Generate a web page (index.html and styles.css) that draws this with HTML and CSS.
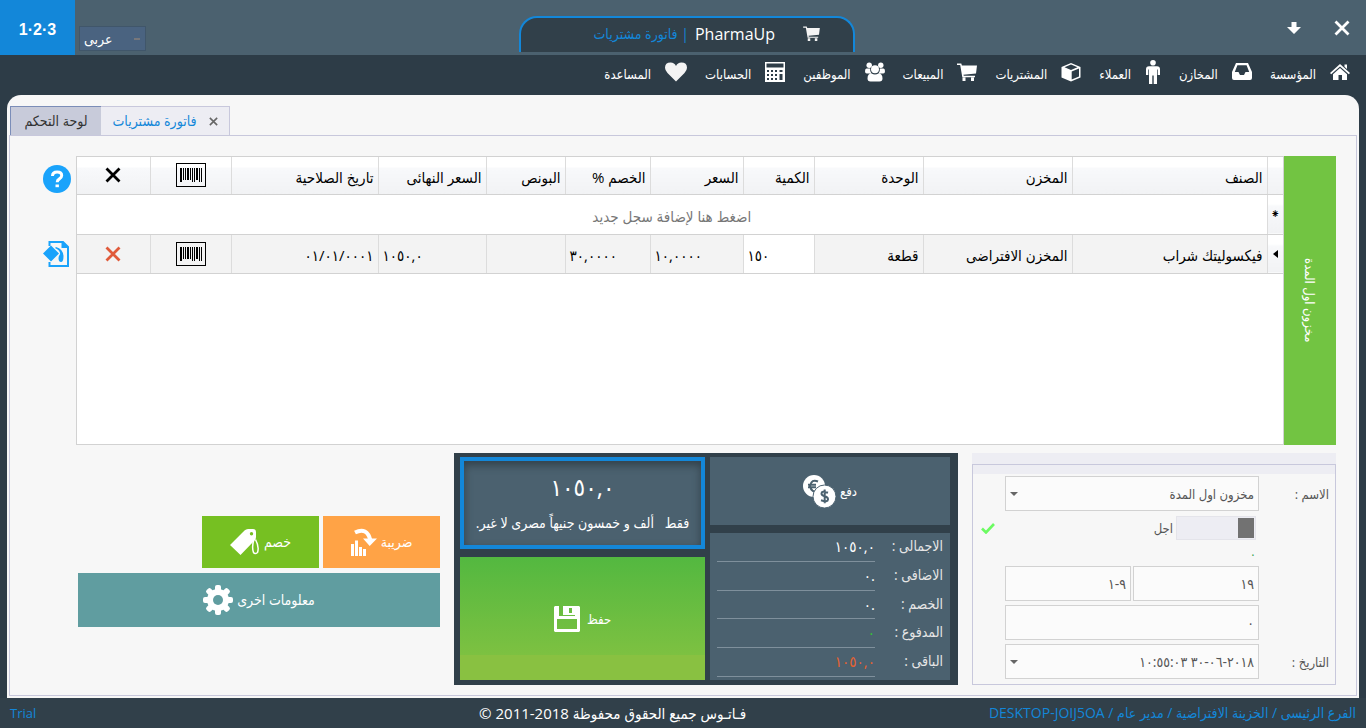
FILE: index.html
```html
<!DOCTYPE html>
<html lang="ar" dir="rtl">
<head>
<meta charset="utf-8">
<title>PharmaUp</title>
<link rel="stylesheet" href="styles.css">
</head>
<body>
<svg class="sprite" aria-hidden="true">
  <symbol id="i-barcode" viewBox="0 0 30 24">
    <rect x="0.5" y="0.5" width="29" height="23" fill="none" stroke="#000"/>
    <path fill="#000" d="M4 5h2v14H4zM7 5h1v12H7zM9 5h1v12H9zM11 5h2v12h-2zM14 5h1v12h-1zM16 5h1v14h-1zM18 5h1v14h-1zM20 5h2v12h-2zM23 5h1v14h-1zM25 5h1v14h-1z"/>
  </symbol>
  <symbol id="i-x" viewBox="0 0 16 16">
    <path d="M1.500 1.500l13 13M14.500 1.500l-13 13" fill="none" stroke="currentColor" stroke-width="2.800"/>
  </symbol>
  <symbol id="i-cart" viewBox="0 0 20 18">
    <path fill="currentColor" d="M0 .5h4.300l.6 2H20l-1 8-12.600 1.300.4 1H18v1.400H5.300L3.200 2H0zM5.500 14.600h3V18h-3zM14 14.600h3V18h-3z"/>
  </symbol>
</svg>

<header class="topbar">
  <div class="window-buttons">
    <button class="icon-btn" type="button" aria-label="إغلاق"><svg width="16" height="16"><use href="#i-x"/></svg></button>
    <button class="icon-btn" type="button" aria-label="تصغير"><svg width="14" height="12" viewBox="0 0 14 12"><path fill="#fff" d="M4.500 0h5v5H14l-7 7-7-7h4.500z"/></svg></button>
  </div>
  <div class="window-title">
    <svg class="title-cart" width="17" height="15"><use href="#i-cart"/></svg>
    <h1 class="app-name">PharmaUp</h1>
    <span class="app-page">| فاتورة مشتريات</span>
  </div>
  <div class="topbar-start">
    <select class="lang" aria-label="اللغة"><option>عربى</option></select>
    <button class="numbers" type="button" dir="ltr">1·2·3</button>
  </div>
</header>

<nav class="menu">
  <a href="#"><svg width="20" height="20" viewBox="0 0 20 20"><path fill="#fff" d="M10 2l10 9-1.200 1.300L10 4.500l-8.800 7.800L0 11zM14.500 2.500H17V7l-2.500-2.200zM10 6l7 6.200V18h-5v-5H8.500v5H3v-5.800z"/></svg><span>المؤسسة</span></a>
  <a href="#"><svg width="20" height="20" viewBox="0 0 20 20"><path fill="#fff" fill-rule="evenodd" d="M4 1h12l4 9v6q0 2-2 2H2q-2 0-2-2v-6zM5.400 3.200L2.800 10h3.700l1.500 3h4l1.500-3h3.700l-2.600-6.800z"/></svg><span>المخازن</span></a>
  <a href="#"><svg width="16" height="24" viewBox="0 0 16 24"><circle cx="8" cy="2.800" r="2.800" fill="#fff"/><path fill="#fff" d="M4 6.300h8q3 0 3 3V15h-2.300V9.500H12V24H8.700v-8.500H7.300V24H4V9.500h-.7V15H1V9.300q0-3 3-3z"/></svg><span>العملاء</span></a>
  <a href="#"><svg width="20" height="20" viewBox="0 0 20 20"><path fill="#fff" fill-rule="evenodd" d="M10 1l9.500 4v10.500L10 19.500.5 15.500V5zM10 2.500L3.500 5.200 10 8l6.500-2.800zM10.700 9.500v8l7.300-3v-8z"/></svg><span>المشتريات</span></a>
  <a href="#"><svg width="20" height="18"><use href="#i-cart"/></svg><span>المبيعات</span></a>
  <a href="#"><svg width="20" height="20" viewBox="0 0 20 20"><g fill="#fff"><circle cx="4.200" cy="3.200" r="2.700"/><circle cx="15.800" cy="3.200" r="2.700"/><circle cx="10" cy="7.300" r="4"/><path d="M1.500 6.500h3.700q-.5 3 1.300 5H1.800Q0 11.500 0 9.300q0-2.800 1.500-2.800zM18.500 6.500h-3.700q.5 3-1.300 5h4.700q1.800 0 1.800-2.200 0-2.800-1.500-2.800zM6.500 11.500q3.500 2 7 0 4 0 4 5 0 3-3 3h-9q-3 0-3-3 0-5 4-5z"/></g></svg><span>الموظفين</span></a>
  <a href="#"><svg width="20" height="22" viewBox="0 0 20 22"><path fill="#fff" fill-rule="evenodd" d="M0 1h20v20H0zM1.500 2.500v4h17v-4zM2 9v2h2V9zM6 9v2h2V9zM10 9v2h2V9zM14.500 9v2h3V9zM2 13v2h2v-2zM6 13v2h2v-2zM10 13v2h2v-2zM14.500 13v6h3v-6zM2 17v2h2v-2zM6 17v2h2v-2zM10 17v2h2v-2z"/></svg><span>الحسابات</span></a>
  <a href="#"><svg width="22" height="20" viewBox="0 0 22 20"><path fill="#f4f4f4" d="M11 19.500L2.500 11Q0 8.500 0 5.800 0 .5 5.600.5 9.500.5 11 4 12.500.5 16.400.5 22 .5 22 5.800q0 2.700-2.500 5.200z"/></svg><span>المساعدة</span></a>
</nav>

<main class="workspace">
  <div class="tabs" role="tablist">
    <div class="tab active" role="tab" aria-selected="true">
      <button class="tab-close" type="button" aria-label="إغلاق التبويب"><svg width="9" height="9"><use href="#i-x"/></svg></button>
      <span>فاتورة مشتريات</span>
    </div>
    <div class="tab" role="tab">لوحة التحكم</div>
  </div>

  <div class="frame">
    <section class="items">
      <div class="side-label"><span>مخزون اول المدة</span></div>
      <div class="grid-box">
        <table class="grid">
          <colgroup>
            <col class="c-mark"><col><col class="c-store"><col class="c-unit"><col class="c-qty"><col class="c-price"><col class="c-disc"><col class="c-bonus"><col class="c-final"><col class="c-date"><col class="c-code"><col class="c-del">
          </colgroup>
          <thead>
            <tr>
              <th></th><th>الصنف</th><th>المخزن</th><th>الوحدة</th><th>الكمية</th><th>السعر</th><th>الخصم %</th><th>البونص</th><th>السعر النهائى</th><th>تاريخ الصلاحية</th>
              <th class="mid"><svg width="30" height="24"><use href="#i-barcode"/></svg></th>
              <th class="mid"><svg width="16" height="16"><use href="#i-x"/></svg></th>
            </tr>
          </thead>
          <tbody>
            <tr class="new-row"><td class="mark">⁕</td><td colspan="11">اضغط هنا لإضافة سجل جديد</td></tr>
            <tr class="row">
              <td class="mark"><svg width="5" height="8" viewBox="0 0 5 8"><path d="M5 0v8L0 4z"/></svg></td>
              <td>فيكسوليتك شراب</td><td>المخزن الافتراضى</td><td>قطعة</td>
              <td class="num editing">١٥٠</td><td class="num">١٠,٠٠٠٠</td><td class="num">٣٠,٠٠٠٠</td><td></td><td class="num">١٠٥٠,٠</td><td>٠١/٠١/٠٠٠١</td>
              <td class="mid"><svg width="30" height="24"><use href="#i-barcode"/></svg></td>
              <td class="mid"><button class="icon-btn delete" type="button" aria-label="حذف"><svg width="16" height="16"><use href="#i-x"/></svg></button></td>
            </tr>
          </tbody>
        </table>
      </div>
      <div class="tools">
        <button class="icon-btn" type="button" aria-label="مساعدة"><svg width="28" height="28" viewBox="0 0 28 28"><circle cx="14" cy="14" r="14" fill="#1aa3fb"/><path d="M9.500 11q0-4 4.600-4t4.600 3.600q0 2-2.300 3.300-2.200 1.200-2.200 3.400" fill="none" stroke="#fff" stroke-width="3"/><path fill="#fff" d="M12.500 19.500h3.400v2.700h-3.400z"/></svg></button>
        <button class="icon-btn" type="button" aria-label="تنسيق"><svg width="26" height="26" viewBox="0 0 26 26"><path d="M6.500 5V1H20l5 5v19H6.500v-4" fill="none" stroke="#1aa3fb" stroke-width="2"/><path fill="#1aa3fb" d="M18.500 0L26 7h-7.500zM0 12.500L8 4.500l8 8-8 8zM13 6q7 2 7.500 9 0 6-2.500 6t-2.500-4q0-2 1.700-4Q17 9 12 7z"/></svg></button>
      </div>
    </section>

    <section class="bottom">
      <form class="details">
        <div class="fields">
          <label for="name">الاسم :</label>
          <span class="pick"><select id="name"><option>مخزون اول المدة</option></select></span>
          <i></i>

          <i></i>
          <span class="switch"><input type="checkbox" id="credit"><label for="credit">اجل</label></span>
          <svg class="tick" width="14" height="11" viewBox="0 0 14 11"><path d="M1 5.500l4 4L13 1" fill="none" stroke="#6cfb62" stroke-width="2.600"/></svg>

          <i></i><output class="balance">٠</output><i></i>

          <i></i>
          <span class="pair"><input type="text" value="١٩" aria-label="الرقم"><input type="text" value="٩-١" aria-label="المرجع"></span>
          <i></i>

          <i></i><input type="text" value="٠" aria-label="القيمة"><i></i>

          <label for="date">التاريخ :</label>
          <span class="pick"><select id="date" class="date"><option>٢٠١٨-٠٦-٣٠ ١٠:٥٥:٠٣</option></select></span>
          <i></i>
        </div>
      </form>

      <div class="summary">
        <div class="summary-col">
          <button class="tile pay" type="button"><span>دفع</span>
            <svg width="33" height="33" viewBox="0 0 33 33"><circle cx="11" cy="11" r="11" fill="#fff"/><path d="M15 6.500q-6.500-3-8 4.500 1.500 7.500 8 4.500M5 9.700h8M5 12.300h8" fill="none" stroke="#4b616f" stroke-width="2"/><circle cx="21.500" cy="21.500" r="11.500" fill="#fff" stroke="#4b616f"/><path d="M25 17.800q-6.500-2.500-6.500.8 0 2 3 2.700 3.500.8 3.500 3-.3 3.200-7 1M21.700 14.500v13.800" fill="none" stroke="#4b616f" stroke-width="2"/></svg>
          </button>
          <dl class="totals">
            <div><dt>الاجمالى :</dt><dd>١٠٥٠,٠</dd></div>
            <div><dt>الاضافى :</dt><dd>٠.</dd></div>
            <div><dt>الخصم :</dt><dd>٠.</dd></div>
            <div><dt>المدفوع :</dt><dd class="paid">٠</dd></div>
            <div><dt>الباقى :</dt><dd class="due">١٠٥٠,٠</dd></div>
          </dl>
        </div>
        <div class="summary-col wide">
          <div class="display"><strong dir="ltr">١٠٥٠,٠</strong><p>فقط &nbsp; ألف و خمسون جنيهاً مصرى لا غير.</p></div>
          <button class="tile save" type="button"><span>حفظ</span>
            <svg width="26" height="26" viewBox="0 0 26 26"><path fill="#fff" fill-rule="evenodd" d="M1 0H5v10h16V0h4l1 1v24l-1 1H1l-1-1V1zM3 13v10h20V13zM9 0h12v9H9zM15 2v5h3V2z"/></svg>
          </button>
        </div>
      </div>

      <div class="actions">
        <button class="tile tax" type="button"><span>ضريبة</span>
          <svg width="26" height="28" viewBox="0 0 26 28"><path fill="#fff" d="M0 16h3v12H0zM4 12.500h3V28H4zM8 19h3v9H8zM12 21h3v7h-3zM12 10.500h14L18.700 18z"/><path d="M4 4.500q12-6 15.500 8" fill="none" stroke="#fff" stroke-width="4"/></svg>
        </button>
        <button class="tile discount" type="button"><span>خصم</span>
          <svg width="30" height="27" viewBox="0 0 30 27"><path fill="#fff" fill-rule="evenodd" d="M0 16L14.500 1.500Q16 0 18 0h5q3 0 3 3v5q0 2-1.500 3.500L10.500 26zM21.500 3a1.700 1.700 0 100 3.400 1.700 1.700 0 000-3.400z"/><path d="M24 10q-2.500 8-.5 13.500 1.500 2 4 0 2-5.500-2-13" fill="none" stroke="#fff" stroke-width="1.500"/></svg>
        </button>
        <button class="tile info" type="button"><span>معلومات اخرى</span>
          <svg width="30" height="30" viewBox="-15 -15 30 30"><g fill="#fff"><g id="teeth"><rect x="-3" y="-15" width="6" height="30" rx="2"/><rect x="-15" y="-3" width="30" height="6" rx="2"/></g><use href="#teeth" transform="rotate(45)"/><circle r="11"/></g><circle r="5" fill="#609da0"/></svg>
        </button>
      </div>
    </section>
  </div>
</main>

<footer class="status">
  <span class="link">الفرع الرئيسى / الخزينة الافتراضية / مدير عام / <bdi>DESKTOP-JOIJ5OA</bdi></span>
  <span class="copy">فـاتـوس جميع الحقوق محفوظة <bdi dir="ltr">© 2011-2018</bdi></span>
  <span class="link trial">Trial</span>
</footer>
</body>
</html>
```
FILE: styles.css
```css
* { box-sizing: border-box; }

body {
  margin: 0;
  min-height: 100vh;
  display: flex;
  flex-direction: column;
  background: #2d3c47;
  color: #000;
  font: 14px/20px "Open Sans", "DejaVu Sans Condensed", "DejaVu Sans", sans-serif;
}

button, input, select { font: inherit; color: inherit; }
button { border: 0; padding: 0; cursor: pointer; }
svg { display: block; flex: none; }
.sprite { position: absolute; width: 0; height: 0; }
.icon-btn { display: flex; background: none; color: #fff; }

/* Title bar */
.topbar {
  display: grid;
  grid-template-columns: 1fr auto 1fr;
  height: 55px;
  background: #4b616f;
}
.window-buttons {
  display: flex;
  align-items: center;
  gap: 33px;
  padding-right: 16px;
}
.window-title {
  display: flex;
  align-items: center;
  align-self: end;
  width: 336px;
  height: 36px;
  margin: 0 0 3px 8px;
  padding: 0 33px 3px 0;
  border: 2px solid #1387d9;
  border-bottom: 0;
  border-radius: 18px 18px 0 0;
  background: #31404a;
}
.title-cart { color: #f4f4f4; }
.app-name {
  margin: 0 28px 0 6px;
  color: #fff;
  font: 16px/22px "Open Sans", sans-serif;
}
.app-page { color: #1387d9; }
.topbar-start { display: flex; justify-content: flex-end; gap: 4px; }
.lang {
  appearance: none;
  align-self: flex-end;
  direction: ltr;
  width: 67px;
  height: 25px;
  margin-bottom: 4px;
  padding: 0 4px;
  border: 1px solid #40566a;
  border-radius: 0;
  color: #fff;
  background: #4a6380 linear-gradient(#77777b, #77777b) no-repeat 54px 11px / 6px 2px;
}
.numbers {
  width: 75px;
  padding-top: 4px;
  background: #1387d9;
  color: #fff;
  font: bold 16px/20px "Liberation Sans", sans-serif;
}

/* Menu */
.menu {
  display: flex;
  gap: 18px;
  height: 40px;
  padding: 0 16px 6px;
}
.menu a {
  display: flex;
  align-items: center;
  gap: 14px;
  color: #fff;
  font-size: 13px;
  text-decoration: none;
}
.menu span { padding-top: 3px; }

/* Workspace */
.workspace {
  flex: 1;
  display: flex;
  flex-direction: column;
  margin: 0 7px;
  padding: 11px 2px 2px;
  border-radius: 14px 14px 0 0;
  background: #f7f7f7;
}
.tabs { display: flex; justify-content: flex-end; padding-left: 1px; }
.tab {
  display: flex;
  align-items: center;
  justify-content: center;
  width: 91px;
  height: 30px;
  margin-bottom: -1px;
  border: 1px solid #7b8db8;
  border-right: 0;
  border-bottom-color: #c8cbda;
  background: #c8cbda;
  color: #333;
}
.tab.active {
  width: 129px;
  gap: 12px;
  border: 1px solid #c8c8dc;
  border-left: 0;
  border-bottom-color: #ededf3;
  background: #ededf3;
  color: #1387d9;
}
.tab-close { background: none; color: #666; }
.frame {
  flex: 1;
  display: flex;
  flex-direction: column;
  gap: 8px;
  padding: 20px 20px 10px 33px;
  border: 1px solid #c8c8dc;
}

/* Items grid */
.items { flex: 1; display: flex; }
.side-label {
  display: flex;
  align-items: center;
  justify-content: center;
  width: 52px;
  background: #72c442;
  color: #fff;
  font-size: 13px;
}
.side-label span { writing-mode: vertical-rl; }
.grid-box {
  flex: 1;
  border: 1px solid #d2d2d2;
  background: #fff;
}
.grid {
  width: 100%;
  border-collapse: collapse;
  table-layout: fixed;
  font-size: 15px;
}
.c-mark { width: 16px; }
.c-store { width: 149px; }
.c-unit { width: 109px; }
.c-qty { width: 71px; }
.c-price { width: 93px; }
.c-disc { width: 85px; }
.c-bonus { width: 79px; }
.c-final { width: 108px; }
.c-date { width: 147px; }
.c-code { width: 81px; }
.c-del { width: 73px; }
.grid th, .grid td {
  height: 39px;
  padding: 3px 4px 0;
  border-left: 1px solid #dcdcdc;
  border-bottom: 1px solid #d2d2d2;
  font-weight: normal;
  text-align: right;
  white-space: nowrap;
}
.grid th:last-child, .grid td:last-child { border-left: 0; }
.grid th {
  height: 37px;
  background: linear-gradient(#fff 10px, #f8f9fb 11px, #f1f2f4);
}
.grid .mid { padding: 0; }
.grid .mid svg, .grid .mid .icon-btn { margin: 0 auto; }
.grid .mark {
  padding: 0;
  background: linear-gradient(#fff 10px, #f8f9fb 11px, #f1f2f4);
  font-size: 12px;
  text-align: center;
}
.mark svg { margin: 0 auto; }
.grid .new-row td { height: 40px; }
.new-row td + td { color: #777; }
.grid .new-row td + td { text-align: center; }
.row td { background: #f3f3f3; }
.grid .num { direction: ltr; text-align: left; }
.row .editing { background: #fff; }
.delete { color: #e05a3a; }
.tools {
  display: flex;
  flex-direction: column;
  align-items: flex-end;
  gap: 48px;
  width: 33px;
  padding-top: 9px;
}

/* Document details */
.bottom { display: flex; gap: 14px; }
.details {
  display: flex;
  width: 364px;
  padding-top: 11px;
  background: #ededf3;
}
.fields {
  flex: 1;
  display: grid;
  grid-template-columns: 70px 1fr 32px;
  grid-template-rows: 35px 26px 17px 35px 35px 35px;
  gap: 4px 0;
  align-items: center;
  padding: 11px 6px 5px 0;
  border: 1px solid #c8c8dc;
  background: linear-gradient(#ededf3 9px, #f7f7f7 9px);
  color: #555;
  font-size: 13px;
}
.fields input[type="text"], .fields select {
  appearance: none;
  width: 100%;
  height: 35px;
  padding: 0 4px;
  border: 1px solid #d2d2d2;
  border-radius: 0;
  background: #fbfbfb;
}
.fields input[type="text"], .fields .date { font-size: 14px; }
.pick { position: relative; }
.pick::after {
  content: "";
  position: absolute;
  left: 5px;
  top: 16px;
  border: 4px solid transparent;
  border-top-color: #666;
  border-bottom: 0;
}
.switch { display: flex; align-items: center; gap: 3px; padding-right: 3px; }
.switch input {
  appearance: none;
  width: 80px;
  height: 24px;
  margin: 0;
  border: 1px solid #e4e4ea;
  background: linear-gradient(#727272, #727272) no-repeat right 1px top 1px / 16px 20px, #ededf3;
}
.tick { margin-right: 10px; }
.balance { padding-right: 3px; color: #3aa655; }
.pair { display: flex; gap: 2px; }

/* Summary */
.summary {
  display: flex;
  gap: 5px;
  width: 504px;
  padding: 4px 8px 5px 6px;
  background: #31404a;
}
.summary-col {
  flex: 240;
  display: flex;
  flex-direction: column;
  gap: 8px;
}
.summary-col.wide { flex: 245; }
.tile {
  display: flex;
  align-items: center;
  justify-content: center;
  gap: 4px;
  color: #fff;
}
.pay { height: 68px; background: #4b616f; font-size: 13px; }
.totals {
  flex: 1;
  display: flex;
  flex-direction: column;
  margin: 0;
  padding: 0 7px 3px;
  background: #4b616f;
  color: #e6e6e6;
}
.totals div { flex: 1; display: flex; justify-content: space-between; }
.totals dt { line-height: 26px; }
.totals dd {
  direction: ltr;
  width: 158px;
  margin: 0;
  border-bottom: 1px solid #7f909c;
  color: #fff;
  font-size: 15px;
  line-height: 27px;
  text-align: right;
}
.totals .paid { color: #35c435; }
.totals .due { color: #e8622f; }
.display {
  display: flex;
  flex-direction: column;
  align-items: center;
  justify-content: center;
  gap: 12px;
  height: 92px;
  border: 4px solid #1387d9;
  background: #4b616f;
  box-shadow: inset 0 4px 8px #31404a;
  color: #fff;
}
.display strong { font-size: 24px; line-height: 28px; font-weight: normal; }
.display p { margin: 0; white-space: nowrap; }
.save {
  flex: 1;
  gap: 7px;
  background: linear-gradient(#53b840, #7dc141 80%, #89c141 80%);
  font-size: 13px;
}

/* Actions */
.actions {
  flex: 1;
  display: grid;
  grid-template-columns: 117px 117px 1fr;
  grid-template-rows: 52px 54px;
  gap: 5px 4px;
  padding-top: 63px;
  margin-left: 35px;
}
.tax { background: #ffa346; }
.discount { background: #76c022; }
.info { grid-column: 1 / -1; background: #609da0; }

/* Status bar */
.status {
  display: grid;
  grid-template-columns: 13fr auto 10fr;
  align-items: center;
  height: 30px;
  padding: 0 10px;
  background: #31404a;
}
.link { color: #1387d9; }
.copy { color: #fff; font-size: 15px; }
.trial { text-align: left; font-size: 13px; }
```
